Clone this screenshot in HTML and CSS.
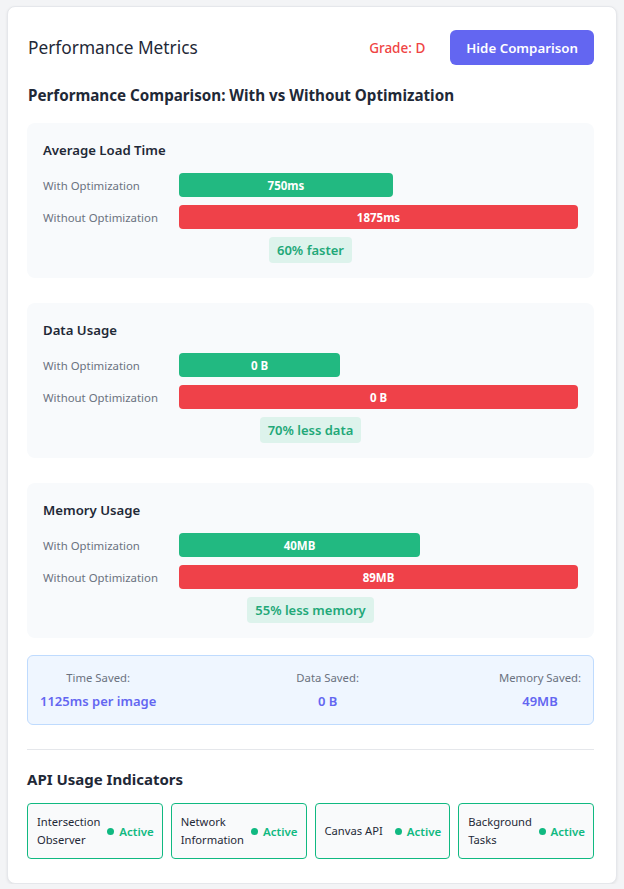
FILE: index.html
```html
<!DOCTYPE html>
<html lang="en">
<head>
<meta charset="utf-8">
<title>Performance Metrics</title>
<link rel="stylesheet" href="styles.css">
</head>
<body>
<div class="card">
  <div class="header">
    <h2 class="title">Performance Metrics</h2>
    <div class="header-right">
      <span class="grade">Grade: D</span>
      <button class="btn">Hide Comparison</button>
    </div>
  </div>

  <h3 class="subtitle">Performance Comparison: With vs Without Optimization</h3>

  <div class="metric">
    <div class="metric-title">Average Load Time</div>
    <div class="row">
      <span class="row-label">With Optimization</span>
      <div class="track"><div class="bar bar-good" style="width:53.6%">750ms</div></div>
    </div>
    <div class="row">
      <span class="row-label">Without Optimization</span>
      <div class="track"><div class="bar bar-bad" style="width:100%">1875ms</div></div>
    </div>
    <div class="badge-wrap"><span class="badge">60% faster</span></div>
  </div>

  <div class="metric">
    <div class="metric-title">Data Usage</div>
    <div class="row">
      <span class="row-label">With Optimization</span>
      <div class="track"><div class="bar bar-good" style="width:40.4%">0 B</div></div>
    </div>
    <div class="row">
      <span class="row-label">Without Optimization</span>
      <div class="track"><div class="bar bar-bad" style="width:100%">0 B</div></div>
    </div>
    <div class="badge-wrap"><span class="badge">70% less data</span></div>
  </div>

  <div class="metric">
    <div class="metric-title">Memory Usage</div>
    <div class="row">
      <span class="row-label">With Optimization</span>
      <div class="track"><div class="bar bar-good" style="width:60.4%">40MB</div></div>
    </div>
    <div class="row">
      <span class="row-label">Without Optimization</span>
      <div class="track"><div class="bar bar-bad" style="width:100%">89MB</div></div>
    </div>
    <div class="badge-wrap"><span class="badge">55% less memory</span></div>
  </div>

  <div class="summary">
    <div class="sum-col">
      <div class="sum-label">Time Saved:</div>
      <div class="sum-value">1125ms per image</div>
    </div>
    <div class="sum-col">
      <div class="sum-label">Data Saved:</div>
      <div class="sum-value">0 B</div>
    </div>
    <div class="sum-col">
      <div class="sum-label">Memory Saved:</div>
      <div class="sum-value">49MB</div>
    </div>
  </div>

  <div class="api">
    <h3 class="api-title">API Usage Indicators</h3>
    <div class="api-grid">
      <div class="api-item"><span class="api-name">Intersection Observer</span><span class="api-status"><span class="dot"></span>Active</span></div>
      <div class="api-item"><span class="api-name">Network Information</span><span class="api-status"><span class="dot"></span>Active</span></div>
      <div class="api-item"><span class="api-name">Canvas API</span><span class="api-status"><span class="dot"></span>Active</span></div>
      <div class="api-item"><span class="api-name">Background Tasks</span><span class="api-status"><span class="dot"></span>Active</span></div>
    </div>
  </div>
</div>
</body>
</html>
```
FILE: styles.css
```css
* { box-sizing: border-box; }
html, body { margin: 0; padding: 0; }
body {
  background: #f3f4f6;
  font-family: "Noto Sans", "Open Sans", sans-serif;
  color: #1f2937;
  padding: 6px 7px 0 7px;
}
.card {
  background: #ffffff;
  border: 1px solid #e5e7eb;
  border-radius: 8px;
  box-shadow: 0 1px 3px rgba(0,0,0,0.08);
  padding: 23px 22px 23px 20px;
  height: 878px;
}
.header {
  display: flex;
  align-items: center;
  justify-content: space-between;
  height: 35px;
}
.title {
  margin: 0;
  font-size: 17.3px;
  font-weight: 400;
  color: #1f2937;
}
.header-right {
  display: flex;
  align-items: center;
  gap: 25px;
}
.grade {
  color: #ef4444;
  font-size: 13.5px;
  font-weight: 500;
}
.btn {
  font-family: inherit;
  background: #6366f1;
  color: #fff;
  border: none;
  border-radius: 6px;
  height: 35px;
  padding: 0 16px;
  font-size: 13.3px;
  font-weight: 600;
}
.subtitle {
  margin: 18px 0 16px 0;
  font-size: 15.2px;
  line-height: 24px;
  font-weight: 700;
  color: #1f2937;
}
.metric {
  background: #f8fafc;
  border-radius: 8px;
  padding: 16px 16px 15px 16px;
  margin: 0 0 25px -1px;
}
.metric-title {
  font-size: 13.2px;
  line-height: 22px;
  font-weight: 600;
  color: #1f2937;
  margin-bottom: 12px;
}
.row {
  display: flex;
  align-items: center;
  height: 24px;
  margin-bottom: 8px;
}
.row-label {
  width: 136px;
  flex: none;
  font-size: 11.4px;
  color: #6b7280;
}
.track { flex: 1; height: 24px; }
.bar {
  height: 24px;
  border-radius: 4px;
  color: #fff;
  font-size: 11.5px;
  font-weight: 700;
  display: flex;
  align-items: center;
  justify-content: center;
}
.bar-good { background: #22b981; }
.bar-bad { background: #ef4149; }
.badge-wrap { display: flex; justify-content: center; }
.badge {
  background: #ddf3ec;
  color: #22a878;
  font-size: 13px;
  font-weight: 600;
  height: 26px;
  line-height: 26px;
  padding: 0 8px;
  border-radius: 4px;
}
.summary {
  margin: -8px 0 0 -1px;
  background: #eff6ff;
  border: 1px solid #bfdbfe;
  border-radius: 6px;
  padding: 13px 12px;
  display: flex;
  justify-content: space-between;
}
.sum-col { text-align: center; }
.sum-label {
  font-size: 11.3px;
  line-height: 18px;
  color: #6b7280;
}
.sum-value {
  margin-top: 4px;
  font-size: 13px;
  line-height: 20px;
  font-weight: 600;
  color: #6366f1;
}
.api {
  margin: 24px 0 0 -1px;
  border-top: 1px solid #e5e7eb;
  padding-top: 17px;
}
.api-title {
  margin: 0 0 12px 0;
  font-size: 15px;
  line-height: 24px;
  font-weight: 700;
  color: #1f2937;
}
.api-grid {
  display: grid;
  grid-template-columns: repeat(4, minmax(0, 1fr));
  gap: 8px;
}
.api-item {
  border: 1px solid #10b981;
  border-radius: 4px;
  background: #f9fafb;
  padding: 9px 8px 9px 9px;
  display: flex;
  align-items: center;
  justify-content: space-between;
  gap: 6px;
  min-height: 56px;
}
.api-name {
  font-size: 11.2px;
  line-height: 18px;
  color: #1f2937;
}
.api-status {
  display: flex;
  align-items: center;
  gap: 5px;
  font-size: 11.5px;
  font-weight: 600;
  color: #10b981;
  flex: none;
}
.dot {
  width: 7px;
  height: 7px;
  border-radius: 50%;
  background: #10b981;
}
```
